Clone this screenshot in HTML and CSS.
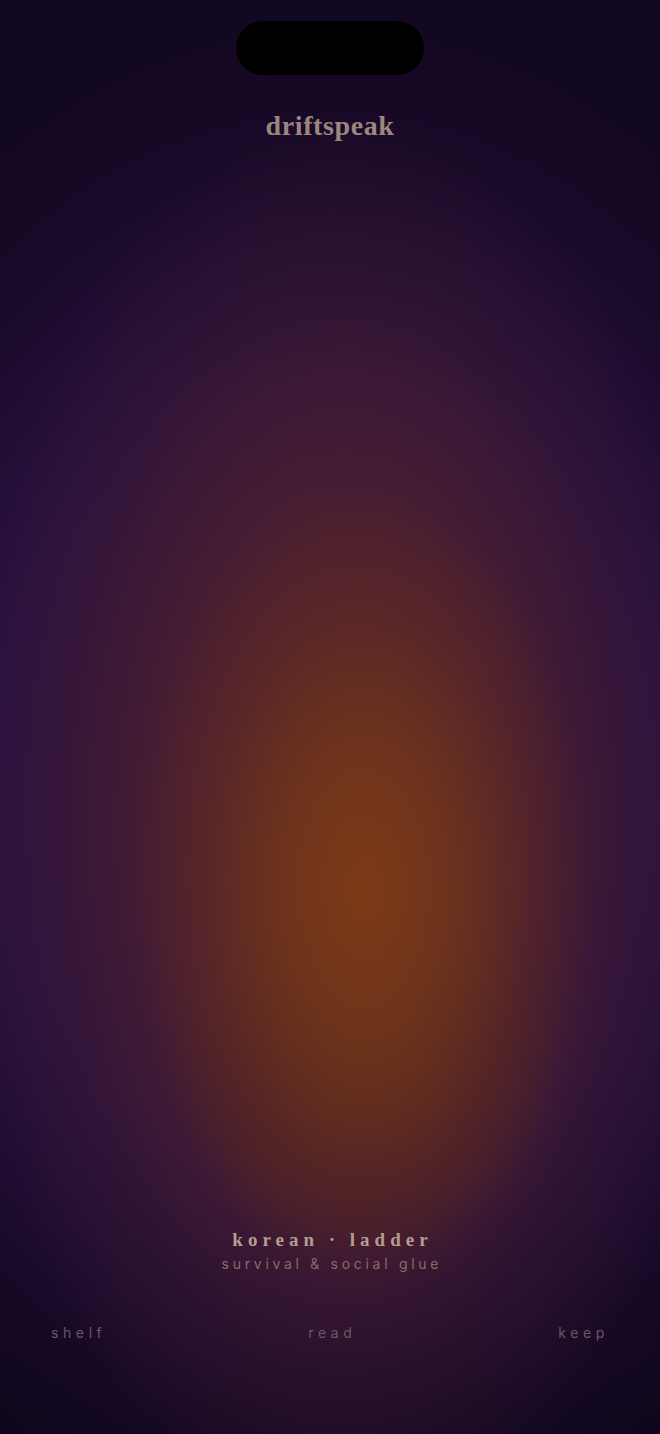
FILE: index.html
```html
<!DOCTYPE html>
<html lang="en">
<head>
<meta charset="utf-8">
<title>driftspeak</title>
<link rel="stylesheet" href="styles.css">
</head>
<body>
<div class="screen">
  <div class="island"></div>
  <h1 class="brand">driftspeak</h1>
  <div class="spacer"></div>
  <div class="deck">
    <div class="deck-title">korean · ladder</div>
    <div class="deck-sub">survival &amp; social glue</div>
  </div>
  <nav class="nav">
    <span class="nav-item">shelf</span>
    <span class="nav-item">read</span>
    <span class="nav-item">keep</span>
  </nav>
</div>
</body>
</html>
```

FILE: styles.css
```css
html, body {
  margin: 0;
  padding: 0;
  background: #0a0416;
}
.screen {
  width: 660px;
  height: 1434px;
  display: flex;
  flex-direction: column;
  align-items: center;
  box-sizing: border-box;
  padding-top: 21px;
  background:
    radial-gradient(ellipse 230px 400px at 365px 890px, rgba(124,58,22,1) 0%, rgba(114,54,26,0.85) 35%, rgba(98,44,32,0.45) 70%, rgba(85,36,40,0) 100%),
    radial-gradient(ellipse 190px 200px at 365px 1060px, rgba(92,44,16,0.6) 0%, rgba(80,36,18,0.3) 60%, rgba(70,30,20,0) 100%),
    radial-gradient(ellipse 380px 720px at 345px 830px, rgba(92,40,38,0.95) 0%, rgba(82,34,44,0.8) 40%, rgba(58,24,44,0.45) 75%, rgba(40,16,40,0) 100%),
    radial-gradient(ellipse 650px 820px at 330px 790px, rgba(62,24,62,1) 0%, rgba(48,20,72,0.9) 50%, rgba(30,12,48,0.55) 78%, rgba(14,6,28,0) 100%),
    linear-gradient(180deg, #110720 0%, #10061c 50%, #0c0518 100%);
}
.island {
  width: 188px;
  height: 54px;
  border-radius: 27px;
  background: #000;
  flex: none;
}
.brand {
  margin: 34px 0 0;
  font-family: "Liberation Serif", "DejaVu Serif", serif;
  font-weight: 700;
  font-size: 28px;
  line-height: 34px;
  color: #9c8680;
  letter-spacing: 0.6px;
}
.spacer {
  flex: 1;
}
.deck {
  display: flex;
  flex-direction: column;
  align-items: center;
}
.deck-title {
  font-family: "Liberation Serif", "DejaVu Serif", serif;
  font-weight: 700;
  font-size: 19px;
  line-height: 24px;
  letter-spacing: 5px;
  color: #b49d92;
  margin-right: -5px;
}
.deck-sub {
  font-family: Inter, "Liberation Sans", sans-serif;
  font-size: 14px;
  line-height: 18px;
  letter-spacing: 3.7px;
  color: #8a6b6c;
  margin-top: 3px;
  margin-right: -3.7px;
}
.nav {
  width: 100%;
  box-sizing: border-box;
  display: flex;
  justify-content: space-between;
  padding: 0 51px 0 51px;
  margin-top: 51px;
  margin-bottom: 92px;
}
.nav-item {
  font-family: Inter, "Liberation Sans", sans-serif;
  font-size: 14px;
  line-height: 18px;
  letter-spacing: 4.6px;
  color: #6e5762;
}
```
